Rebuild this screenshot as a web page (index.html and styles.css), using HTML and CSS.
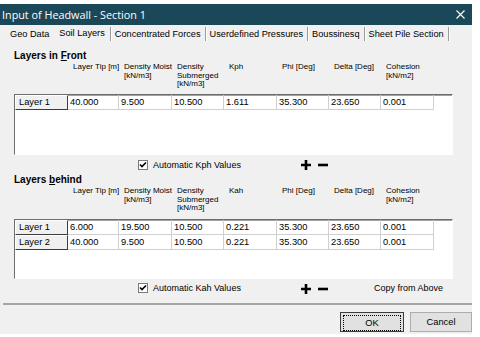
FILE: index.html
```html
<!DOCTYPE html>
<html lang="en">
<head>
  <meta charset="UTF-8" />
  <title>Input of Headwall - Section 1</title>
  <link rel="stylesheet" href="styles.css">
</head>
<body>
  <div class="window">
    <div class="titlebar">
      <span class="title">Input of Headwall - Section 1</span>
      <svg class="close" width="9" height="9" viewBox="0 0 9 9"><path d="M0.5 0.5 L8.5 8.5 M8.5 0.5 L0.5 8.5" stroke="#fff" stroke-width="1.1" fill="none"/></svg>
    </div>

    <div class="tabs">
      <span class="tab first">Geo Data</span>
      <span class="tab active">Soil Layers</span>
      <span class="tab">Concentrated Forces</span>
      <span class="tab">Userdefined Pressures</span>
      <span class="tab">Boussinesq</span>
      <span class="tab">Sheet Pile Section</span>
    </div>

    <div class="page">
      <h2>Layers in <u>F</u>ront</h2>
      <div class="heads">
        <span></span>
        <span>Layer Tip [m]</span>
        <span>Density Moist<br>[kN/m3]</span>
        <span>Density<br>Submerged<br>[kN/m3]</span>
        <span>Kph</span>
        <span>Phi [Deg]</span>
        <span>Delta [Deg]</span>
        <span>Cohesion<br>[kN/m2]</span>
      </div>
      <div class="grid front">
        <div class="row">
          <span class="cell rowhead">Layer 1</span>
          <span class="cell">40.000</span>
          <span class="cell">9.500</span>
          <span class="cell">10.500</span>
          <span class="cell">1.611</span>
          <span class="cell">35.300</span>
          <span class="cell">23.650</span>
          <span class="cell">0.001</span>
        </div>
      </div>
      <div class="options">
        <label class="check"><span class="box"><svg width="8" height="8" viewBox="0 0 8 8"><path d="M1 3.5 L3 5.5 L7 1.5" stroke="#000" stroke-width="1.6" fill="none"/></svg></span>Automatic Kph Values</label>
        <span class="plusminus">
          <svg width="10" height="10" viewBox="0 0 10 10"><path d="M0 5 H10 M5 0 V10" stroke="#000" stroke-width="2.6"/></svg>
          <svg width="10" height="10" viewBox="0 0 10 10"><path d="M0 5 H10" stroke="#000" stroke-width="2.6"/></svg>
        </span>
      </div>

      <h2>Layers <u>b</u>ehind</h2>
      <div class="heads behind">
        <span></span>
        <span>Layer Tip [m]</span>
        <span>Density Moist<br>[kN/m3]</span>
        <span>Density<br>Submerged<br>[kN/m3]</span>
        <span>Kah</span>
        <span>Phi [Deg]</span>
        <span>Delta [Deg]</span>
        <span>Cohesion<br>[kN/m2]</span>
      </div>
      <div class="grid back">
        <div class="row">
          <span class="cell rowhead">Layer 1</span>
          <span class="cell">6.000</span>
          <span class="cell">19.500</span>
          <span class="cell">10.500</span>
          <span class="cell">0.221</span>
          <span class="cell">35.300</span>
          <span class="cell">23.650</span>
          <span class="cell">0.001</span>
        </div>
        <div class="row">
          <span class="cell rowhead">Layer 2</span>
          <span class="cell">40.000</span>
          <span class="cell">9.500</span>
          <span class="cell">10.500</span>
          <span class="cell">0.221</span>
          <span class="cell">35.300</span>
          <span class="cell">23.650</span>
          <span class="cell">0.001</span>
        </div>
      </div>
      <div class="options last">
        <label class="check"><span class="box"><svg width="8" height="8" viewBox="0 0 8 8"><path d="M1 3.5 L3 5.5 L7 1.5" stroke="#000" stroke-width="1.6" fill="none"/></svg></span>Automatic Kah Values</label>
        <span class="plusminus">
          <svg width="10" height="10" viewBox="0 0 10 10"><path d="M0 5 H10 M5 0 V10" stroke="#000" stroke-width="2.6"/></svg>
          <svg width="10" height="10" viewBox="0 0 10 10"><path d="M0 5 H10" stroke="#000" stroke-width="2.6"/></svg>
        </span>
        <span class="copy">Copy from Above</span>
      </div>
    </div>

    <div class="footer">
      <button class="btn ok"><span>OK</span></button>
      <button class="btn">Cancel</button>
    </div>
  </div>
</body>
</html>
```

FILE: styles.css
```css
body {
  margin: 0;
  background: #fff;
  font-family: "Liberation Sans", Arial, sans-serif;
  color: #000;
}

.window {
  width: 472px;
  height: 330px;
  margin-top: 4px;
  background: #f0f0f0;
  overflow: hidden;
}

.titlebar {
  height: 21px;
  background: #1b4859;
  color: #fff;
  display: flex;
  align-items: center;
  justify-content: space-between;
  padding: 0 3px 0 2px;
}

.title {
  font-family: "Open Sans", sans-serif;
  font-size: 10.8px;
}

.close {
  margin-right: 4px;
}

/* tab strip */
.tabs {
  height: 18px;
  display: flex;
  align-items: center;
  padding-left: 6px;
  font-size: 9.2px;
}

.tab {
  height: 14px;
  line-height: 15px;
  padding: 0 4px 0 3px;
  border-right: 1px solid #9a9a9a;
  box-shadow: 1px 0 0 #fff;
  margin-right: 1px;
}

.tab.first {
  padding-left: 4px;
  border-right-color: transparent;
  box-shadow: none;
}

.tab.active {
  line-height: 12px;
  padding: 0 5px 0 4px;
}

.page {
  padding: 7px 0 0 14px;
}

h2 {
  margin: 0;
  height: 12px;
  line-height: 12px;
  font-size: 10px;
  font-weight: bold;
}

.heads {
  display: grid;
  grid-template-columns: 54px 51px 53px 52px 53px 52px 52px 53px;
  height: 31px;
  padding-top: 1px;
  font-size: 8px;
  line-height: 8.5px;
  white-space: nowrap;
}

.heads.behind {
  height: 32px;
}

.heads span {
  padding-left: 5px;
}

.grid {
  width: 437px;
  height: 59px;
  background: #fff;
  border: 1px solid;
  border-color: #6d6d6d #fff #fff #6d6d6d;
  box-shadow: inset 0 1px 0 #a0a0a0;
}

.grid.back {
  height: 58px;
}

.row {
  display: grid;
  grid-template-columns: 53px 51px 53px 52px 53px 52px 52px 53px;
  height: 15px;
}

.cell {
  font-size: 9.3px;
  line-height: 14px;
  padding-left: 2px;
  border-right: 1px solid #d0d0d0;
  border-bottom: 1px solid #d0d0d0;
  white-space: nowrap;
  overflow: hidden;
}

.cell.rowhead {
  background: #f0f0f0;
  padding-left: 3px;
  border: 1px solid;
  border-color: #fff #3c3c3c #3c3c3c #fff;
  line-height: 13px;
}

.options {
  height: 19px;
  display: flex;
  align-items: center;
  font-size: 9px;
}

.options.last {
  height: 18px;
}

.check {
  width: 163px;
  margin-left: 124px;
  display: flex;
  align-items: center;
}

.box {
  width: 8px;
  height: 8px;
  background: #fff;
  border: 1px solid #7a7a7a;
  margin-right: 5px;
  display: flex;
}

.plusminus {
  width: 73px;
  display: flex;
  gap: 7px;
  padding-top: 1px;
}

.footer {
  margin: 6px 0 0 3px;
  border-top: 2px solid #a5a5a5;
  padding-top: 7px;
  display: flex;
  justify-content: flex-end;
  gap: 6px;
}

.btn {
  width: 62px;
  height: 20px;
  padding: 0;
  font-family: "Liberation Sans", Arial, sans-serif;
  font-size: 9.3px;
  background: #e1e1e1;
  border: 1px solid #adadad;
  color: #000;
}

.btn.ok {
  width: 64px;
  border-color: #3c3c3c;
  padding: 2px;
}

.btn.ok span {
  display: block;
  height: 14px;
  line-height: 14px;
  border: 1px dotted #000;
}
```
